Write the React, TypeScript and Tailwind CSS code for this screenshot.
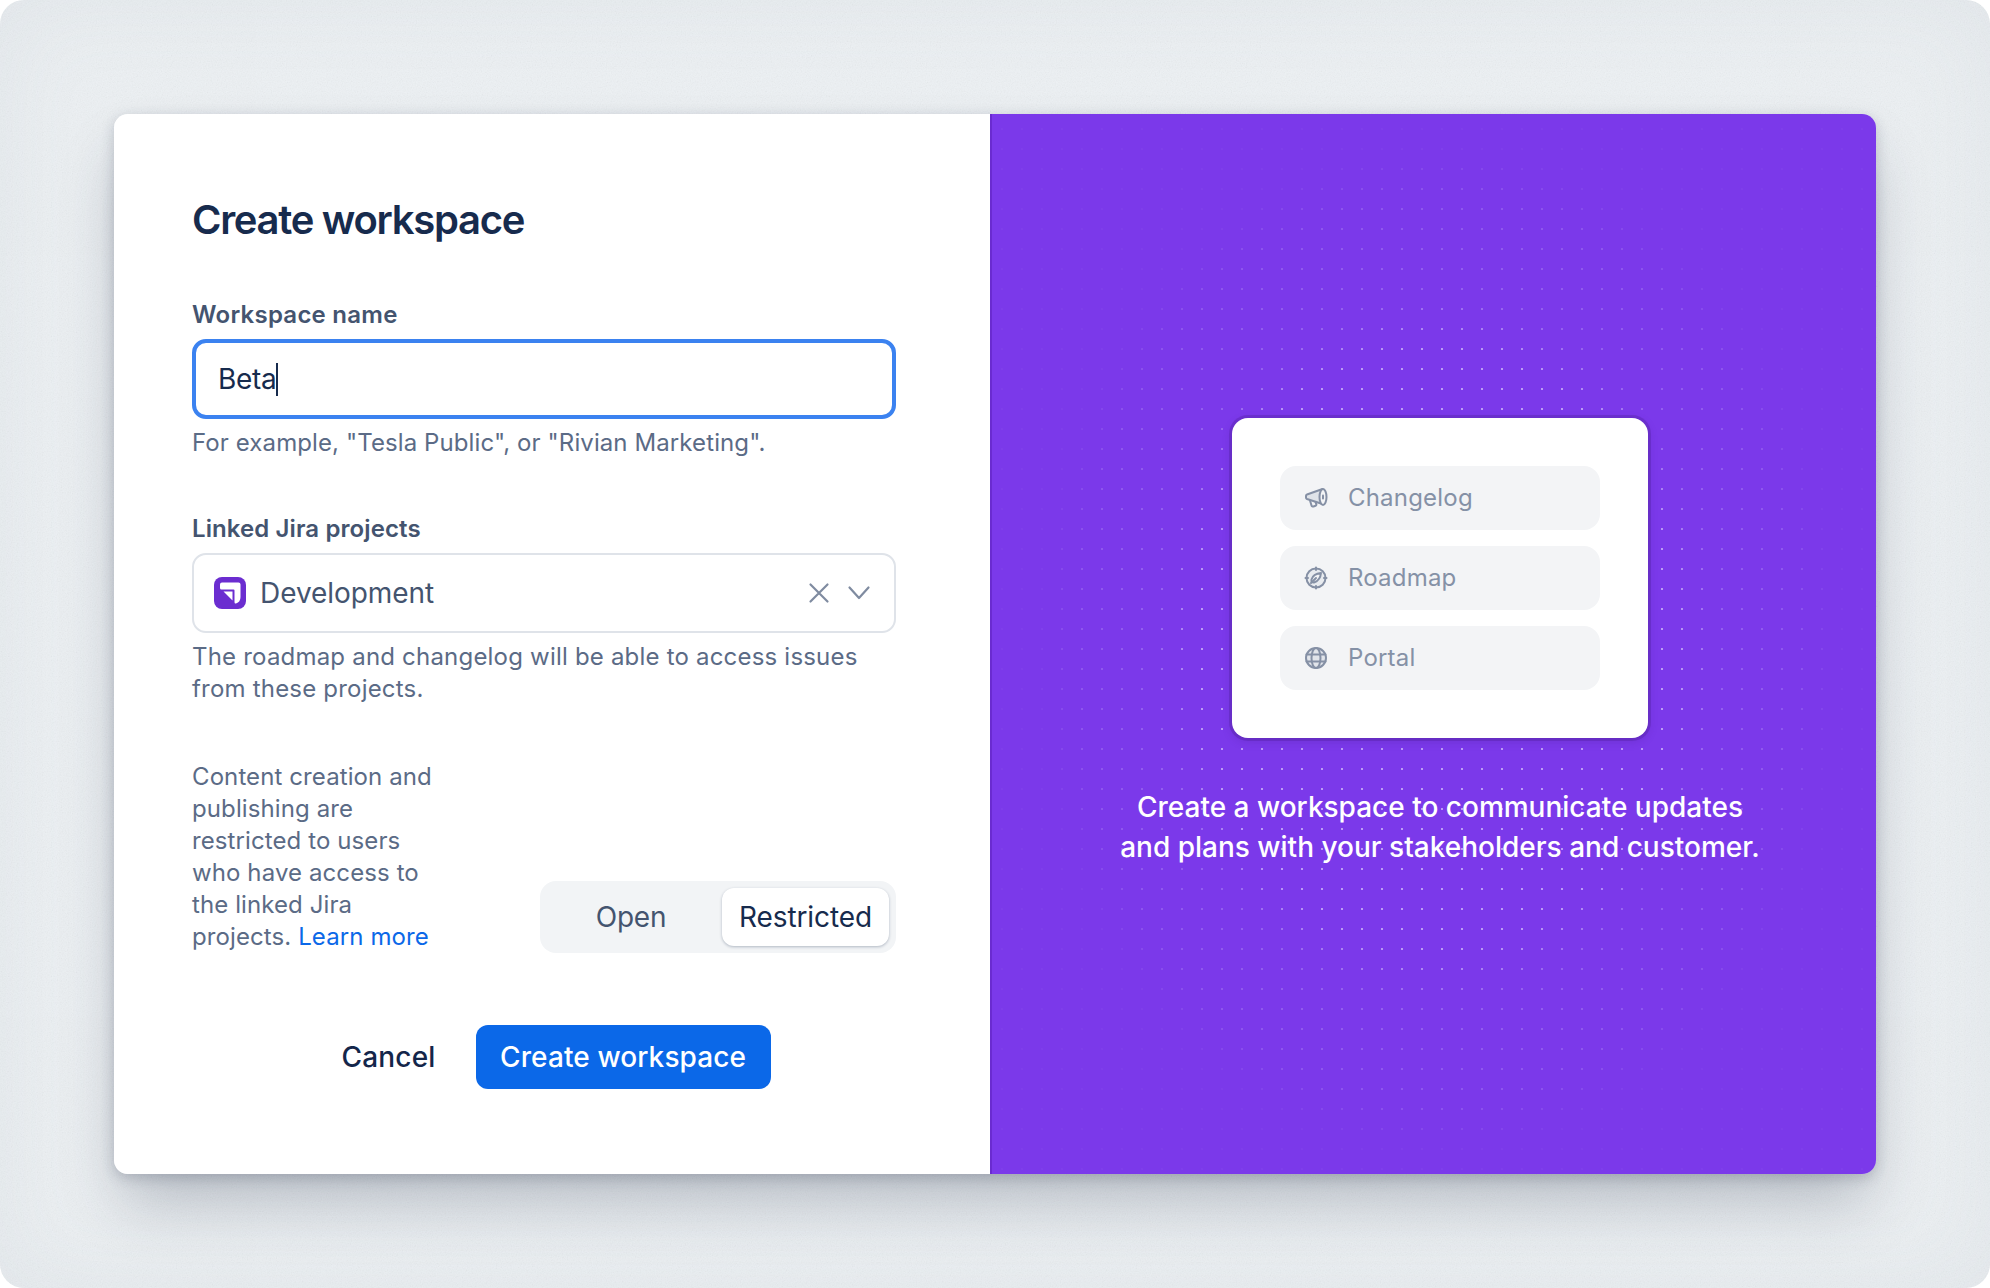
import React from "react";

function DotField() {
  return (
    <svg className="absolute inset-0 h-full w-full" width="884" height="1060" aria-hidden="true">
      <defs>
        <pattern id="dots" x="9" y="14" width="20" height="20" patternUnits="userSpaceOnUse">
          <rect width="2" height="2" fill="#fff" />
        </pattern>
        <radialGradient id="fade" gradientUnits="userSpaceOnUse" cx="0" cy="0" r="1" gradientTransform="translate(445 535) scale(400 505)">
          <stop offset="0" stopColor="#fff" stopOpacity="0.5" />
          <stop offset="0.6" stopColor="#fff" stopOpacity="0.5" />
          <stop offset="0.7" stopColor="#fff" stopOpacity="0.2" />
          <stop offset="0.9" stopColor="#fff" stopOpacity="0.15" />
          <stop offset="1" stopColor="#fff" stopOpacity="0.03" />
        </radialGradient>
        <mask id="dotmask">
          <rect width="884" height="1060" fill="url(#fade)" />
        </mask>
      </defs>
      <rect width="884" height="1060" fill="url(#dots)" mask="url(#dotmask)" />
    </svg>
  );
}

function Noise() {
  return (
    <svg className="absolute inset-0 h-full w-full opacity-[0.13]" aria-hidden="true">
      <filter id="grain">
        <feTurbulence type="fractalNoise" baseFrequency="0.8" numOctaves="2" stitchTiles="stitch" />
        <feColorMatrix type="saturate" values="0" />
      </filter>
      <rect width="100%" height="100%" filter="url(#grain)" />
    </svg>
  );
}

function JiraMark() {
  return (
    <svg width="32" height="32" viewBox="0 0 32 32" className="shrink-0">
      <rect width="32" height="32" rx="8" fill="#6b2dd0" />
      <path d="M6 7.500Q6 5.500 8 5.500H24.500Q26.500 5.500 26.500 7.500V20Q26.500 25 22 26.500Q20.500 27 20.500 25V13.500Q20.500 12.500 19.500 12.500H7.500Q6 12.500 6 11Z" fill="#fff" />
      <path d="M9.500 14.500H18.500V23.500Z" fill="#fff" />
    </svg>
  );
}

function MegaphoneIcon() {
  return (
    <svg width="24" height="24" viewBox="0 0 24 24" fill="none" stroke="#8590a5" strokeWidth="2" strokeLinejoin="round" strokeLinecap="round">
      <path d="M18.500 3 3 8.500a1.500 1.500 0 0 0-1 1.500v1.500a1.500 1.500 0 0 0 1 1.500l15.500 5z" fill="#dfe3e9" />
      <ellipse cx="19" cy="11" rx="3.500" ry="8" fill="#f3f4f6" />
      <path d="M19 9.500v3" />
      <path d="M6 14.500 7.500 19.500a1.500 1.500 0 0 0 2 1l2-.7a1.300 1.300 0 0 0 .8-1.700L11.500 16" />
    </svg>
  );
}

function CompassIcon() {
  return (
    <svg width="24" height="24" viewBox="0 0 24 24" fill="none" stroke="#8590a5" strokeWidth="2" strokeLinejoin="round" strokeLinecap="round">
      <circle cx="12" cy="12" r="9.500" fill="#e8ebef" />
      <path d="M12 1.500v2.500M12 20v2.500M1.500 12H4M20 12h2.500" />
      <path d="M17 7c-5 .5-8.500 3-9.500 6.500-.3 1 0 2 .5 2.500.7.500 1.500.7 2.500.3C14 15 16.500 12 17 7Z" fill="#f3f4f6" />
      <path d="M7 17l5-5" />
    </svg>
  );
}

function GlobeIcon() {
  return (
    <svg width="24" height="24" viewBox="0 0 24 24" fill="none" stroke="#8590a5" strokeWidth="2" strokeLinejoin="round" strokeLinecap="round">
      <circle cx="12" cy="12" r="10" fill="#e1e4ea" />
      <ellipse cx="12" cy="12" rx="4.500" ry="10" />
      <path d="M2.500 8.500h19M2.500 15.500h19" />
    </svg>
  );
}

function NavRow({ icon, label }: { icon: React.ReactNode; label: string }) {
  return (
    <div className="flex h-16 items-center gap-[20px] rounded-2xl bg-[#f3f4f6] pl-[24px] text-[24px] tracking-[0.2px] text-[#8591a6]">
      {icon}
      <span>{label}</span>
    </div>
  );
}

export default function App() {
  return (
    <div className="relative flex h-[1288px] w-[1990px] items-start overflow-hidden rounded-[24px] bg-[#edf1f4] pl-[114px] pt-[114px] font-['Inter','Liberation_Sans',sans-serif] shadow-[inset_0_0_90px_rgba(120,130,145,0.07)]">
      <Noise />
      <div className="relative flex h-[1060px] w-[1762px] overflow-hidden rounded-[14px] shadow-[0_36px_60px_-8px_rgba(40,50,75,0.26),0_4px_14px_rgba(40,50,75,0.22)]">
        <div className="flex w-[876px] shrink-0 flex-col bg-white pl-[78px] pr-[94px] pt-[82px]">
          <h1 className="text-[40px] font-semibold leading-[48px] tracking-[-1.3px] text-[#172b4d]">Create workspace</h1>

          <label className="mt-[55px] text-[24px] font-semibold leading-[32px] tracking-[0.25px] text-[#44546f]">Workspace name</label>
          <div className="mt-[8px] flex h-[80px] items-center rounded-[14px] border-[4px] border-[#3b82f0] pl-[22px] text-[28px] tracking-[-0.3px] text-[#172b4d]">
            <span>Beta</span>
            <span className="h-[33px] w-[2px] bg-[#172b4d]" />
          </div>
          <p className="mt-[8px] text-[24px] leading-[32px] tracking-[0.1px] text-[#5b6b86]">For example, "Tesla Public", or "Rivian Marketing".</p>

          <label className="mt-[54px] text-[24px] font-semibold leading-[32px] tracking-[0.1px] text-[#44546f]">Linked Jira projects</label>
          <div className="mt-[8px] flex h-[80px] items-center rounded-[14px] border-2 border-[#dfe3e9] pl-[20px] pr-[23px] text-[#44546f]">
            <JiraMark />
            <span className="ml-[14px] flex-1 text-[28px] tracking-[-0.05px]">Development</span>
            <svg width="24" height="24" viewBox="0 0 24 24" fill="none" stroke="#7f8ba0" strokeWidth="2.200" strokeLinecap="round">
              <path d="M3.500 3.500l17 17M20.500 3.500l-17 17" />
            </svg>
            <svg className="ml-[16px]" width="24" height="24" viewBox="0 0 24 24" fill="none" stroke="#7f8ba0" strokeWidth="2.200" strokeLinecap="round" strokeLinejoin="round">
              <path d="M2.500 6.500 12 17l9.500-10.500" />
            </svg>
          </div>
          <p className="mt-[8px] text-[24px] leading-[32px] tracking-[0.2px] text-[#5b6b86]">The roadmap and changelog will be able to access issues from these projects.</p>

          <div className="mt-[56px] flex items-end justify-between">
            <p className="w-[250px] text-[24px] leading-[32px] tracking-[0.1px] text-[#5b6b86]">
              Content creation and publishing are restricted to users who have access to the linked Jira projects. <a className="text-[#0b68e8]">Learn more</a>
            </p>
            <div className="flex h-[72px] w-[356px] items-center rounded-2xl bg-[#f2f4f6] p-[7px] text-[28px]">
              <span className="flex-1 pr-[7px] text-center tracking-[-0.2px] text-[#44546f]">Open</span>
              <span className="flex h-[58px] w-[167px] items-center justify-center rounded-xl bg-white tracking-[-0.1px] text-[#172b4d] shadow-[0_1px_3px_rgba(23,43,77,0.3)]">Restricted</span>
            </div>
          </div>

          <div className="mt-[72px] flex items-center justify-center gap-[16px]">
            <button className="h-16 px-6 text-[28px] font-medium tracking-[0.2px] text-[#14264a]">Cancel</button>
            <button className="h-16 w-[295px] rounded-xl bg-[#0b68e8] text-[28px] font-medium tracking-[0.1px] text-white">Create workspace</button>
          </div>
        </div>

        <div className="relative flex flex-1 flex-col items-center justify-center border-l-2 border-[#6a2bd0] bg-[#7b39ea] pb-[4px] pl-[12px]">
          <DotField />
          <div className="relative flex w-[416px] flex-col gap-4 rounded-2xl bg-white p-12 shadow-[0_0_0_3px_rgba(76,29,149,0.3),0_3px_10px_rgba(76,29,149,0.3)]">
            <NavRow icon={<MegaphoneIcon />} label="Changelog" />
            <NavRow icon={<CompassIcon />} label="Roadmap" />
            <NavRow icon={<GlobeIcon />} label="Portal" />
          </div>
          <p className="relative mt-[49px] text-center text-[28px] font-medium leading-[40px] tracking-[0px] text-white">
            Create a workspace to communicate updates
            <br />
            and plans with your stakeholders and customer.
          </p>
        </div>
      </div>
    </div>
  );
}
